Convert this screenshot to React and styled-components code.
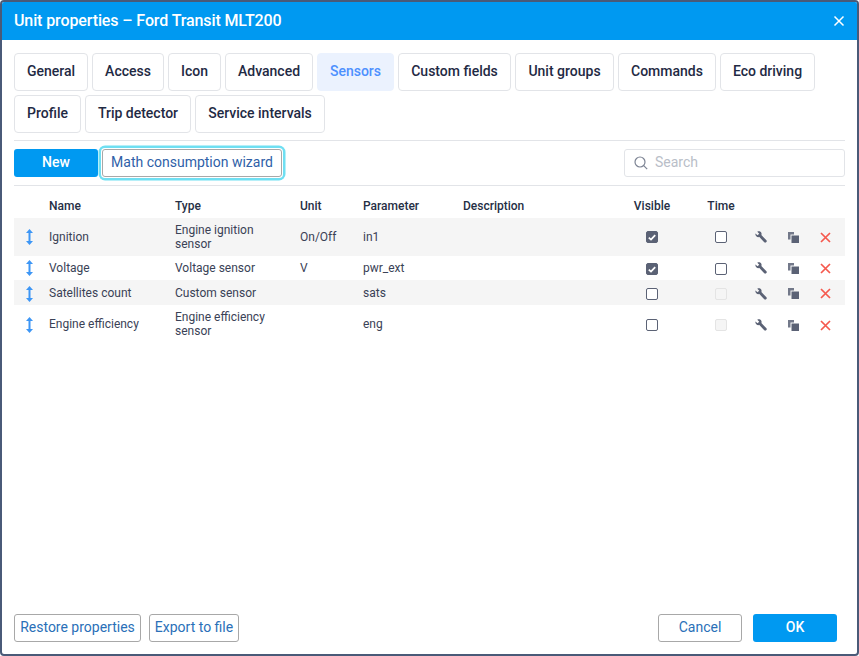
import React from 'react';
import styled, { createGlobalStyle } from 'styled-components';

const Global = createGlobalStyle`
  html, body { margin: 0; padding: 0; background: #fff; }
  body { font-family: Roboto, "Liberation Sans", sans-serif; }
  * { box-sizing: border-box; }
`;

const Dialog = styled.div`
  width: 859px; height: 656px; display: flex; flex-direction: column;
  border: 2px solid #4a5a78; border-radius: 4px; background: #fff; overflow: hidden;
`;
const Header = styled.header`
  height: 38px; flex: none; background: #0099f1; color: #fff; display: flex; align-items: center;
  justify-content: space-between; padding: 0 12px 1px 12px; font-size: 16px; font-weight: 500;
  letter-spacing: -0.11px;
`;
const Close = styled.button`
  border: 0; background: none; padding: 0; width: 12px; height: 12px; display: flex; cursor: pointer;
`;
const Body = styled.div`
  flex: 1; display: flex; flex-direction: column; padding: 13px 12px 12px; min-height: 0;
`;
const Tabs = styled.nav`
  display: flex; flex-wrap: wrap; gap: 4px; padding-bottom: 7px; border-bottom: 1px solid #e2e4e8;
`;
const Tab = styled.button`
  height: 38px; width: ${p => p.$w}px; padding: 0 0 2px; border-radius: 4px; font: 500 14px Roboto, sans-serif;
  border: 1px solid ${p => (p.$active ? '#ebf2fe' : '#e2e4e8')};
  background: ${p => (p.$active ? '#ebf2fe' : '#fff')};
  color: ${p => (p.$active ? '#4d90fe' : '#1f2a44')};
`;
const Toolbar = styled.div`
  height: 45px; display: flex; align-items: center; gap: 4px; border-bottom: 1px solid #e2e4e8;
`;
const Primary = styled.button`
  height: 28px; width: ${p => p.$w}px; padding: 0 0 2px; border: 0; border-radius: 3px; background: #0099f1; color: #fff;
  font: 500 14px Roboto, sans-serif;
`;
const Outline = styled.button`
  height: 28px; width: ${p => p.$w}px; padding: 0 0 2px; border: 1px solid #a8a8a8; border-radius: 3px; background: #fff;
  color: #2a70b8; font: 400 14px Roboto, sans-serif;
`;
const Focused = styled(Outline)`
  color: #2f5fa8; box-shadow: 0 0 0 1px #fff, 0 0 0 3.5px #6fdff2;
`;
const Search = styled.label`
  margin-left: auto; width: 221px; height: 28px; border: 1px solid #e2e4e8; border-radius: 3px;
  display: flex; align-items: center; gap: 7px; padding: 0 0 2px 9px; color: #b9bec8; font-size: 14px;
  & svg { margin-top: 2px; }
`;
const Table = styled.table`
  width: 831px; border-collapse: collapse; table-layout: fixed; margin-top: 11px;
  font-size: 12px; color: #3a4256;
`;
const Th = styled.th`
  height: 21px; padding: 0 0 3px; text-align: ${p => (p.$center ? 'center' : 'left')};
  font-weight: 500; color: #262f45; line-height: 14px; vertical-align: middle;
`;
const Check = styled.i`
  width: 12px; height: 12px; border-radius: 2px;
  border: 1px solid ${p => (p.$disabled ? '#e4e4e4' : '#5b6275')};
  background: ${p => (p.$on ? '#5b6275' : p.$disabled ? '#f5f5f5' : '#fff')};
  display: flex; align-items: center; justify-content: center;
  margin-top: ${p => (p.$drop ? 2 : 0)}px;
`;
const CenterBox = styled.span`
  display: flex; justify-content: center; align-items: center;
`;
const Row = styled.tr`
  background: ${p => (p.$odd ? '#f5f5f5' : '#fff')};
  height: ${p => p.$h}px;
  & > td > ${CenterBox} > svg { margin-top: ${p => (p.$drop ? 2 : 0)}px; }
`;
const Td = styled.td`
  padding: 0 10px 0 0; line-height: 14px; vertical-align: middle;
`;
const IconCell = styled.td`
  padding: 0 ${p => p.$right || 0}px 0 0; vertical-align: middle;
`;
const Spacer = styled.div`flex: 1;`;
const Footer = styled.footer`
  height: 28px; flex: none; display: flex; align-items: center; gap: 8px;
`;
const FooterRight = styled.div`
  margin-left: auto; margin-right: 8px; display: flex; gap: 11px;
`;

const Handle = () => (
  <svg width="7" height="16" viewBox="0 0 7 16" fill="#3d96f5">
    <path d="M3.500 0 7 4H4.500V12H7L3.500 16 0 12H2.500V4H0Z" />
  </svg>
);
const Wrench = () => (
  <svg width="12" height="12" viewBox="0 0 13 13" fill="#5b6275">
    <path d="M.5 2.6 2.7 4.7 4.6 3 2.5.7C4-.1 5.9.4 6.7 1.7c.5.9.6 1.9.2 2.7l5.500 5.600c.5.5.5 1.200 0 1.800l-.5.5c-.5.5-1.300.5-1.800 0L4.700 6.600C3.600 7 2.300 6.700 1.400 5.800.6 4.900.2 3.700.5 2.600Z" />
  </svg>
);
const Copy = () => (
  <svg width="11" height="11" viewBox="0 0 11 11" fill="#5b6275">
    <path d="M0 0H6V2.500H2.500V7.500H0Z" opacity="0.85" />
    <path d="M3.500 3.500H11V11H3.500Z" />
  </svg>
);
const Cross = () => (
  <svg width="11" height="11" viewBox="0 0 11 11" stroke="#f5594e" strokeWidth="1.700" fill="none">
    <path d="M1 1 10 10M10 1 1 10" />
  </svg>
);
const Tick = () => (
  <svg width="8" height="7" viewBox="0 0 8 7" fill="none" stroke="#fff" strokeWidth="1.800">
    <path d="M.8 3.600 3 5.600 7.200 1.200" />
  </svg>
);

const tabItems = [
  ['General', 74], ['Access', 72], ['Icon', 53], ['Advanced', 88], ['Sensors', 77], ['Custom fields', 113],
  ['Unit groups', 99], ['Commands', 98], ['Eco driving', 95], ['Profile', 67], ['Trip detector', 106], ['Service intervals', 130],
];

const columnWidths = [35, 126, 125, 63, 100, 164, 50, 19, 50, 30, 34, 30, 5];

const rows = [
  { h: 38, name: 'Ignition', type: 'Engine ignition sensor', unit: 'On/Off', param: 'in1', vis: true, time: 'off' },
  { h: 24, name: 'Voltage', type: 'Voltage sensor', unit: 'V', param: 'pwr_ext', vis: true, time: 'off' },
  { h: 25, name: 'Satellites count', type: 'Custom sensor', unit: '', param: 'sats', vis: false, time: 'disabled' },
  { h: 38, name: 'Engine efficiency', type: 'Engine efficiency sensor', unit: '', param: 'eng', vis: false, time: 'disabled' },
];

export default function App() {
  return (
    <>
      <Global />
      <Dialog>
        <Header>
          <span>Unit properties – Ford Transit MLT200</span>
          <Close aria-label="Close">
            <svg width="12" height="12" viewBox="0 0 12 12" stroke="#fff" strokeWidth="1.500" fill="none">
              <path d="M1.500 1.500 10.500 10.500M10.500 1.500 1.500 10.500" />
            </svg>
          </Close>
        </Header>
        <Body>
          <Tabs>
            {tabItems.map(([t, w]) => <Tab key={t} $w={w} $active={t === 'Sensors'}>{t}</Tab>)}
          </Tabs>
          <Toolbar>
            <Primary $w={84}>New</Primary>
            <Focused $w={180}>Math consumption wizard</Focused>
            <Search>
              <svg width="14" height="14" viewBox="0 0 14 14" fill="none" stroke="#7d8494" strokeWidth="1.200">
                <circle cx="6" cy="6" r="5" />
                <path d="M9.700 9.700 13.200 13.200" />
              </svg>
              Search
            </Search>
          </Toolbar>
          <Table>
            <colgroup>
              {columnWidths.map((w, i) => <col key={i} width={w} />)}
            </colgroup>
            <thead>
              <tr>
                <Th />
                <Th>Name</Th><Th>Type</Th><Th>Unit</Th><Th>Parameter</Th><Th>Description</Th>
                <Th $center>Visible</Th><Th /><Th $center>Time</Th><Th /><Th /><Th /><Th />
              </tr>
            </thead>
            <tbody>
              {rows.map((r, i) => (
                <Row key={r.name} $h={r.h} $odd={i % 2 === 0} $drop={i >= 2}>
                  <IconCell $right={5}><CenterBox><Handle /></CenterBox></IconCell>
                  <Td>{r.name}</Td>
                  <Td>{r.type}</Td>
                  <Td>{r.unit}</Td>
                  <Td>{r.param}</Td>
                  <Td />
                  <IconCell><CenterBox><Check $drop={i >= 1} $on={r.vis}>{r.vis && <Tick />}</Check></CenterBox></IconCell>
                  <IconCell />
                  <IconCell><CenterBox><Check $drop={i >= 1} $disabled={r.time === 'disabled'} /></CenterBox></IconCell>
                  <IconCell><CenterBox><Wrench /></CenterBox></IconCell>
                  <IconCell><CenterBox><Copy /></CenterBox></IconCell>
                  <IconCell><CenterBox><Cross /></CenterBox></IconCell>
                  <IconCell />
                </Row>
              ))}
            </tbody>
          </Table>
          <Spacer />
          <Footer>
            <Outline $w={127}>Restore properties</Outline>
            <Outline $w={90}>Export to file</Outline>
            <FooterRight>
              <Outline $w={84}>Cancel</Outline>
              <Primary $w={84}>OK</Primary>
            </FooterRight>
          </Footer>
        </Body>
      </Dialog>
    </>
  );
}
